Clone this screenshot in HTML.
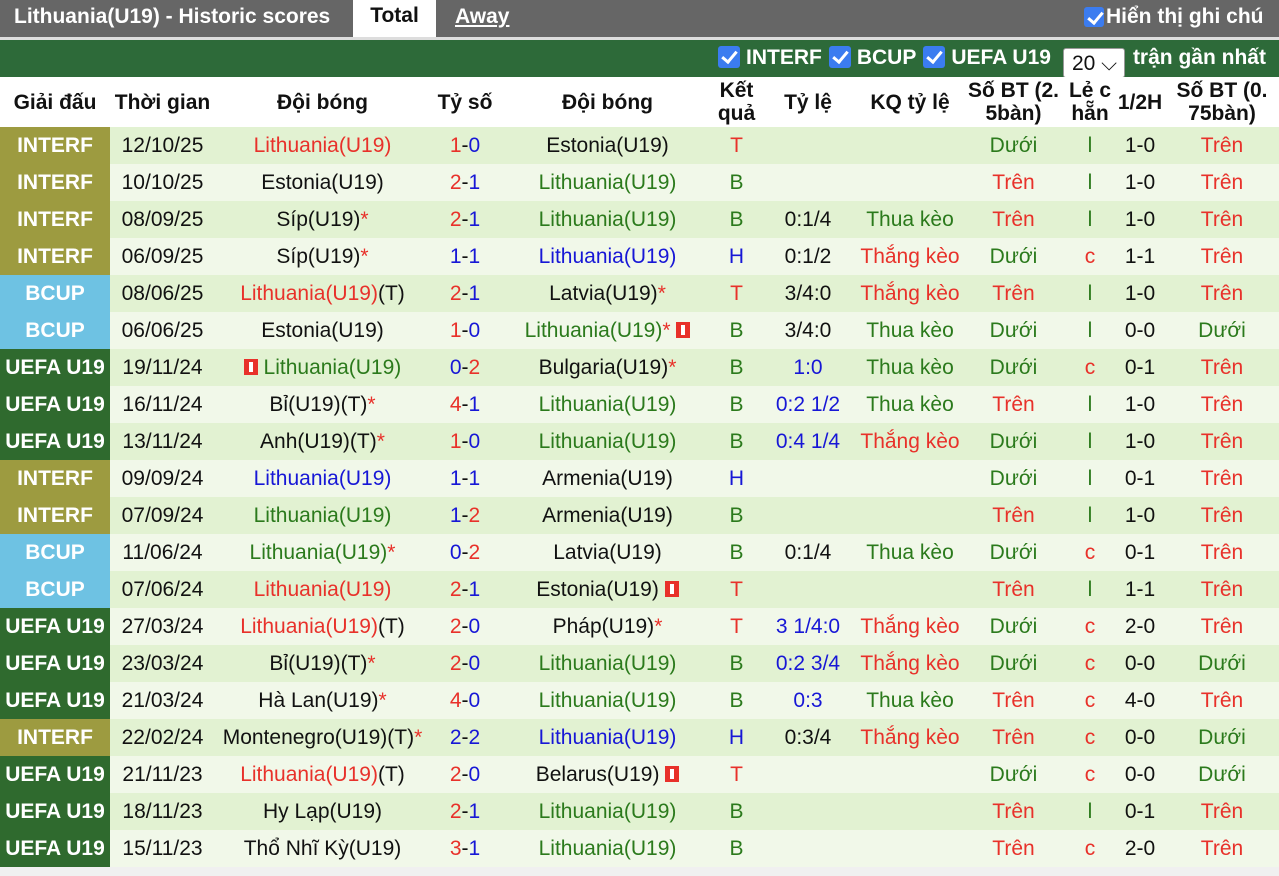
<!DOCTYPE html>
<html><head><meta charset="utf-8"><style>
*{margin:0;padding:0;box-sizing:border-box}
body{width:1279px;height:876px;background:#f0f0f0;font-family:"Liberation Sans",Arial,sans-serif;overflow:hidden;position:relative}
.top{position:absolute;left:0;top:0;width:1279px;height:37px;background:#666;color:#fff;font-weight:bold;font-size:21px}
.top .t1{position:absolute;left:14px;top:5px}
.top .tab{position:absolute;left:353px;top:0;width:83px;height:37px;background:#fff;color:#111;text-align:center;line-height:32px}
.top .aw{position:absolute;left:455px;top:5px;text-decoration:underline}
.top .hn{position:absolute;left:1084px;top:5px}
.cb{display:inline-block;width:22px;height:22px;background:#3b7cf0;border-radius:3px;vertical-align:-4px;position:relative;margin-right:6px}
.top .cb{width:20px;height:20px;margin-right:2px}
.cb:after{content:"";position:absolute;left:7px;top:2px;width:6px;height:12px;border:solid #fff;border-width:0 3px 3px 0;transform:rotate(40deg)}
.gap{position:absolute;top:37px;left:0;width:1279px;height:3px;background:#ddd}
.gb{position:absolute;top:40px;left:0;width:1279px;height:37px;background:#2d6a39;color:#fff;font-weight:bold;font-size:21px}
.gb .f{position:absolute;left:718px;top:6px;white-space:nowrap}
.gb .it{margin-right:7px}
.sel{display:inline-block;background:#fff;color:#111;font-weight:normal;border-radius:3px;width:62px;height:30px;line-height:30px;padding-left:8px;margin:0 8px 0 12px;vertical-align:-6px;border:1px solid #999}
table{position:absolute;top:77px;left:0;width:1279px;border-collapse:collapse;table-layout:fixed;font-size:21px}
th{height:50px;background:#fff;font-weight:bold;font-size:21px;line-height:23px;color:#111;white-space:nowrap;overflow:hidden}
td{height:37px;text-align:center;color:#111;white-space:nowrap;overflow:hidden;padding:0}
tr.o td{background:#e2f2d2}tr.e td{background:#f1f8e9}
td.I{background:#9d9b40!important;color:#fff;font-weight:bold}
td.Bc{background:#6ec2e3!important;color:#fff;font-weight:bold}
td.U{background:#2f6a2e!important;color:#fff;font-weight:bold}
.r{color:#e8312a}.g{color:#2b7a1c}.b{color:#1717d6}
.s{color:#e8312a}
.card{display:inline-block;width:14px;height:16px;background:#e8312a;vertical-align:-1px;position:relative}
.card:after{content:"";position:absolute;left:5px;top:3px;width:4px;height:10px;background:#fff}
</style></head><body>
<div class="top"><span class="t1">Lithuania(U19) - Historic scores</span><div class="tab">Total</div><span class="aw">Away</span><span class="hn"><span class="cb"></span>Hiển thị ghi chú</span></div>
<div class="gap"></div>
<div class="gb"><div class="f"><span class="cb"></span><span class="it">INTERF</span><span class="cb"></span><span class="it">BCUP</span><span class="cb"></span>UEFA U19<span class="sel">20 ⌵</span>trận gần nhất</div></div>
<table>
<colgroup><col style="width:110px"><col style="width:105px"><col style="width:215px"><col style="width:70px"><col style="width:215px"><col style="width:43px"><col style="width:100px"><col style="width:104px"><col style="width:103px"><col style="width:50px"><col style="width:50px"><col style="width:114px"></colgroup>
<tr><th>Giải đấu</th><th>Thời gian</th><th>Đội bóng</th><th>Tỷ số</th><th>Đội bóng</th><th>Kết<br>quả</th><th>Tỷ lệ</th><th>KQ tỷ lệ</th><th>Số BT (2.<br>5bàn)</th><th>Lẻ c<br>hẵn</th><th>1/2H</th><th>Số BT (0.<br>75bàn)</th></tr>
<tr class="o"><td class="I">INTERF</td><td>12/10/25</td><td class="r">Lithuania(U19)</td><td><span class="r">1</span>-<span class="b">0</span></td><td>Estonia(U19)</td><td class="r">T</td><td></td><td></td><td class="g">Dưới</td><td class="g">l</td><td>1-0</td><td class="r">Trên</td></tr>
<tr class="e"><td class="I">INTERF</td><td>10/10/25</td><td>Estonia(U19)</td><td><span class="r">2</span>-<span class="b">1</span></td><td class="g">Lithuania(U19)</td><td class="g">B</td><td></td><td></td><td class="r">Trên</td><td class="g">l</td><td>1-0</td><td class="r">Trên</td></tr>
<tr class="o"><td class="I">INTERF</td><td>08/09/25</td><td>Síp(U19)<span class="s">*</span></td><td><span class="r">2</span>-<span class="b">1</span></td><td class="g">Lithuania(U19)</td><td class="g">B</td><td>0:1/4</td><td class="g">Thua kèo</td><td class="r">Trên</td><td class="g">l</td><td>1-0</td><td class="r">Trên</td></tr>
<tr class="e"><td class="I">INTERF</td><td>06/09/25</td><td>Síp(U19)<span class="s">*</span></td><td><span class="b">1</span>-<span class="b">1</span></td><td class="b">Lithuania(U19)</td><td class="b">H</td><td>0:1/2</td><td class="r">Thắng kèo</td><td class="g">Dưới</td><td class="r">c</td><td>1-1</td><td class="r">Trên</td></tr>
<tr class="o"><td class="Bc">BCUP</td><td>08/06/25</td><td><span class="r">Lithuania(U19)</span>(T)</td><td><span class="r">2</span>-<span class="b">1</span></td><td>Latvia(U19)<span class="s">*</span></td><td class="r">T</td><td>3/4:0</td><td class="r">Thắng kèo</td><td class="r">Trên</td><td class="g">l</td><td>1-0</td><td class="r">Trên</td></tr>
<tr class="e"><td class="Bc">BCUP</td><td>06/06/25</td><td>Estonia(U19)</td><td><span class="r">1</span>-<span class="b">0</span></td><td><span class="g">Lithuania(U19)</span><span class="s">*</span> <span class="card"></span></td><td class="g">B</td><td>3/4:0</td><td class="g">Thua kèo</td><td class="g">Dưới</td><td class="g">l</td><td>0-0</td><td class="g">Dưới</td></tr>
<tr class="o"><td class="U">UEFA U19</td><td>19/11/24</td><td><span class="card"></span> <span class="g">Lithuania(U19)</span></td><td><span class="b">0</span>-<span class="r">2</span></td><td>Bulgaria(U19)<span class="s">*</span></td><td class="g">B</td><td class="b">1:0</td><td class="g">Thua kèo</td><td class="g">Dưới</td><td class="r">c</td><td>0-1</td><td class="r">Trên</td></tr>
<tr class="e"><td class="U">UEFA U19</td><td>16/11/24</td><td>Bỉ(U19)(T)<span class="s">*</span></td><td><span class="r">4</span>-<span class="b">1</span></td><td class="g">Lithuania(U19)</td><td class="g">B</td><td class="b">0:2 1/2</td><td class="g">Thua kèo</td><td class="r">Trên</td><td class="g">l</td><td>1-0</td><td class="r">Trên</td></tr>
<tr class="o"><td class="U">UEFA U19</td><td>13/11/24</td><td>Anh(U19)(T)<span class="s">*</span></td><td><span class="r">1</span>-<span class="b">0</span></td><td class="g">Lithuania(U19)</td><td class="g">B</td><td class="b">0:4 1/4</td><td class="r">Thắng kèo</td><td class="g">Dưới</td><td class="g">l</td><td>1-0</td><td class="r">Trên</td></tr>
<tr class="e"><td class="I">INTERF</td><td>09/09/24</td><td class="b">Lithuania(U19)</td><td><span class="b">1</span>-<span class="b">1</span></td><td>Armenia(U19)</td><td class="b">H</td><td></td><td></td><td class="g">Dưới</td><td class="g">l</td><td>0-1</td><td class="r">Trên</td></tr>
<tr class="o"><td class="I">INTERF</td><td>07/09/24</td><td class="g">Lithuania(U19)</td><td><span class="b">1</span>-<span class="r">2</span></td><td>Armenia(U19)</td><td class="g">B</td><td></td><td></td><td class="r">Trên</td><td class="g">l</td><td>1-0</td><td class="r">Trên</td></tr>
<tr class="e"><td class="Bc">BCUP</td><td>11/06/24</td><td><span class="g">Lithuania(U19)</span><span class="s">*</span></td><td><span class="b">0</span>-<span class="r">2</span></td><td>Latvia(U19)</td><td class="g">B</td><td>0:1/4</td><td class="g">Thua kèo</td><td class="g">Dưới</td><td class="r">c</td><td>0-1</td><td class="r">Trên</td></tr>
<tr class="o"><td class="Bc">BCUP</td><td>07/06/24</td><td class="r">Lithuania(U19)</td><td><span class="r">2</span>-<span class="b">1</span></td><td>Estonia(U19) <span class="card"></span></td><td class="r">T</td><td></td><td></td><td class="r">Trên</td><td class="g">l</td><td>1-1</td><td class="r">Trên</td></tr>
<tr class="e"><td class="U">UEFA U19</td><td>27/03/24</td><td><span class="r">Lithuania(U19)</span>(T)</td><td><span class="r">2</span>-<span class="b">0</span></td><td>Pháp(U19)<span class="s">*</span></td><td class="r">T</td><td class="b">3 1/4:0</td><td class="r">Thắng kèo</td><td class="g">Dưới</td><td class="r">c</td><td>2-0</td><td class="r">Trên</td></tr>
<tr class="o"><td class="U">UEFA U19</td><td>23/03/24</td><td>Bỉ(U19)(T)<span class="s">*</span></td><td><span class="r">2</span>-<span class="b">0</span></td><td class="g">Lithuania(U19)</td><td class="g">B</td><td class="b">0:2 3/4</td><td class="r">Thắng kèo</td><td class="g">Dưới</td><td class="r">c</td><td>0-0</td><td class="g">Dưới</td></tr>
<tr class="e"><td class="U">UEFA U19</td><td>21/03/24</td><td>Hà Lan(U19)<span class="s">*</span></td><td><span class="r">4</span>-<span class="b">0</span></td><td class="g">Lithuania(U19)</td><td class="g">B</td><td class="b">0:3</td><td class="g">Thua kèo</td><td class="r">Trên</td><td class="r">c</td><td>4-0</td><td class="r">Trên</td></tr>
<tr class="o"><td class="I">INTERF</td><td>22/02/24</td><td>Montenegro(U19)(T)<span class="s">*</span></td><td><span class="b">2</span>-<span class="b">2</span></td><td class="b">Lithuania(U19)</td><td class="b">H</td><td>0:3/4</td><td class="r">Thắng kèo</td><td class="r">Trên</td><td class="r">c</td><td>0-0</td><td class="g">Dưới</td></tr>
<tr class="e"><td class="U">UEFA U19</td><td>21/11/23</td><td><span class="r">Lithuania(U19)</span>(T)</td><td><span class="r">2</span>-<span class="b">0</span></td><td>Belarus(U19) <span class="card"></span></td><td class="r">T</td><td></td><td></td><td class="g">Dưới</td><td class="r">c</td><td>0-0</td><td class="g">Dưới</td></tr>
<tr class="o"><td class="U">UEFA U19</td><td>18/11/23</td><td>Hy Lạp(U19)</td><td><span class="r">2</span>-<span class="b">1</span></td><td class="g">Lithuania(U19)</td><td class="g">B</td><td></td><td></td><td class="r">Trên</td><td class="g">l</td><td>0-1</td><td class="r">Trên</td></tr>
<tr class="e"><td class="U">UEFA U19</td><td>15/11/23</td><td>Thổ Nhĩ Kỳ(U19)</td><td><span class="r">3</span>-<span class="b">1</span></td><td class="g">Lithuania(U19)</td><td class="g">B</td><td></td><td></td><td class="r">Trên</td><td class="r">c</td><td>2-0</td><td class="r">Trên</td></tr>
</table>
</body></html>
